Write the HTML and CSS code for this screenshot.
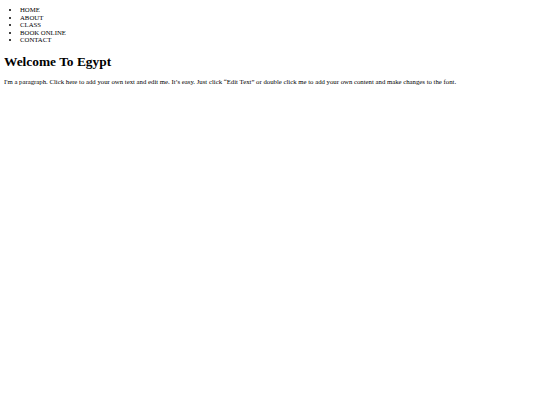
FILE: index.html
```html
<!DOCTYPE html>
<html>
<head>
<meta charset="utf-8">
<title>Welcome To Egypt</title>
<link rel="stylesheet" href="styles.css">
</head>
<body class="page">
<ul class="nav">
<li>HOME</li>
<li>ABOUT</li>
<li>CLASS</li>
<li>BOOK ONLINE</li>
<li>CONTACT</li>
</ul>
<h1 class="title">Welcome To Egypt</h1>
<p class="text">I'm a paragraph. Click here to add your own text and edit me. It’s easy. Just click “Edit Text” or double click me to add your own content and make changes to the font.</p>
</body>
</html>
```

FILE: styles.css
```css
html { background: #fff; }
.page {
  margin: 0 4px;
  padding: 0;
  font-family: "Liberation Serif", "Times New Roman", serif;
  font-size: 6.75px;
  color: #000;
}
.nav {
  margin: 6px 0 10px;
  padding-left: 16px;
  line-height: 7.5px;
}
.title {
  font-size: 13.4px;
  line-height: 15px;
  margin: 0 0 9px;
}
.text {
  margin: 0;
  line-height: 8px;
}
```
